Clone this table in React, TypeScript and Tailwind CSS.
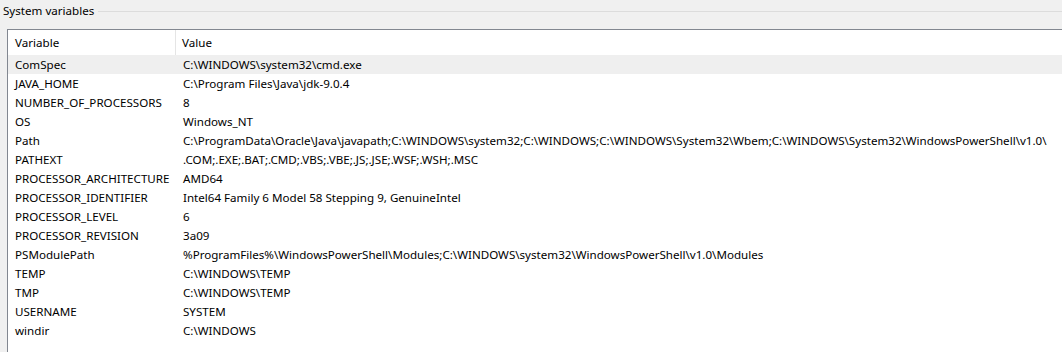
import React from 'react';

const rows: [string, string][] = [
  ['ComSpec', 'C:\\WINDOWS\\system32\\cmd.exe'],
  ['JAVA_HOME', 'C:\\Program Files\\Java\\jdk-9.0.4'],
  ['NUMBER_OF_PROCESSORS', '8'],
  ['OS', 'Windows_NT'],
  ['Path', 'C:\\ProgramData\\Oracle\\Java\\javapath;C:\\WINDOWS\\system32;C:\\WINDOWS;C:\\WINDOWS\\System32\\Wbem;C:\\WINDOWS\\System32\\WindowsPowerShell\\v1.0\\'],
  ['PATHEXT', '.COM;.EXE;.BAT;.CMD;.VBS;.VBE;.JS;.JSE;.WSF;.WSH;.MSC'],
  ['PROCESSOR_ARCHITECTURE', 'AMD64'],
  ['PROCESSOR_IDENTIFIER', 'Intel64 Family 6 Model 58 Stepping 9, GenuineIntel'],
  ['PROCESSOR_LEVEL', '6'],
  ['PROCESSOR_REVISION', '3a09'],
  ['PSModulePath', '%ProgramFiles%\\WindowsPowerShell\\Modules;C:\\WINDOWS\\system32\\WindowsPowerShell\\v1.0\\Modules'],
  ['TEMP', 'C:\\WINDOWS\\TEMP'],
  ['TMP', 'C:\\WINDOWS\\TEMP'],
  ['USERNAME', 'SYSTEM'],
  ['windir', 'C:\\WINDOWS'],
];

export default function App() {
  return (
    <div
      className="w-[1062px] h-[352px] overflow-hidden bg-[#f0f0f0] text-[11.6px] text-black"
      style={{ fontFamily: '"Noto Sans", "Open Sans", sans-serif' }}
    >
      {/* group box title */}
      <div className="flex items-center h-[22px]">
        <span className="pl-[3px] pr-[4px] leading-none whitespace-nowrap">System variables</span>
        <div className="flex-1 h-px bg-[#dcdcdc]" />
      </div>

      {/* list view */}
      <div className="ml-[7px] mt-[7px] h-[330px] bg-white border-t border-l border-[#828790] whitespace-nowrap">
        <div className="flex h-[25px] items-center">
          <div className="w-[168px] pl-[7px] h-full flex items-center border-r border-[#e5e5e5]">Variable</div>
          <div className="pl-[6px]">Value</div>
        </div>
        {rows.map(([name, value], i) => (
          <div key={name} className={`flex h-[19px] items-center ${i === 0 ? 'bg-[#efefef]' : ''}`}>
            <div className="w-[168px] pl-[7px] shrink-0">{name}</div>
            <div className="pl-[7px]">{value}</div>
          </div>
        ))}
      </div>
    </div>
  );
}
